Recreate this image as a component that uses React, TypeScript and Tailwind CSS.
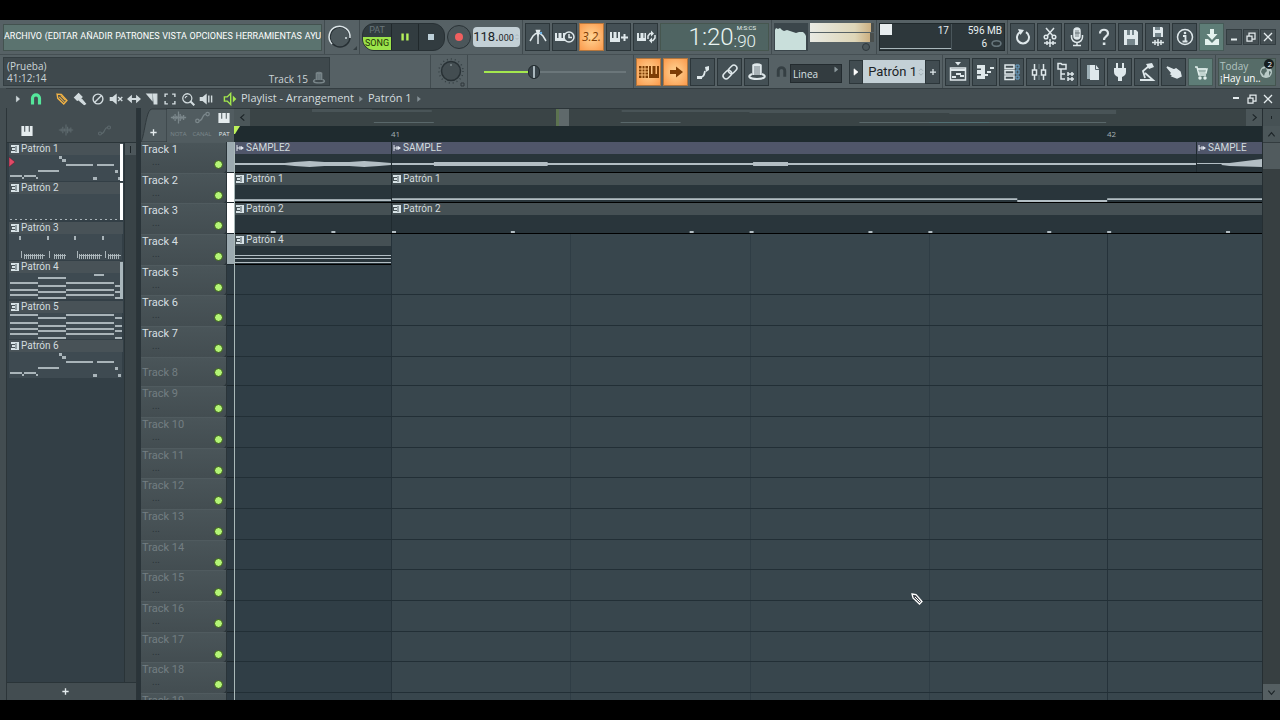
import type { ReactNode } from 'react';
import clsx from 'clsx';

type Note = [x: number, y: number, width: number, height?: number];

interface Pattern {
  name: string;
  notes: Note[];
  bar?: string;
  playing?: boolean;
}

const NARROW = 'font-[Roboto,sans-serif]';

const MELODY: Note[] = [
  [0, 20, 12], [12, 22, 2], [14, 20, 12], [26, 22, 2], [28, 15, 21], [49, 1, 3, 3], [52, 4, 4, 3],
  [56, 9, 27], [87, 9, 17], [105, 15, 3, 3], [83, 22, 4, 3], [108, 22, 3, 3],
];

const DRUM_BLOCKS: [number, number][] = [[14, 21], [44, 12], [69, 23], [98, 13]];

const DRUMS: Note[] = [
  ...[9, 37, 64, 92].map((x): Note => [x, 2, 2, 4]),
  ...[11, 39, 67, 95].map((x): Note => [x, 17, 1, 7]),
  ...DRUM_BLOCKS.flatMap(([x, w]) =>
    Array.from({ length: Math.floor(w / 2) }, (_, i): Note => [x + i * 2, 20, 1, 5]),
  ),
  ...DRUM_BLOCKS.map(([x, w]): Note => [x, 21, w, 1]),
];

function chords(outer: number[], inner: number[]): Note[] {
  return [
    ...outer.flatMap((y): Note[] => [[0, y, 28], [56, y, 48]]),
    ...inner.flatMap((y): Note[] => [[28, y, 28], [105, y, 7]]),
  ];
}

const PATTERNS: Pattern[] = [
  { name: 'Patrón 1', notes: MELODY, bar: 'bg-white', playing: true },
  { name: 'Patrón 2', notes: Array.from({ length: 22 }, (_, i): Note => [i * 5, 25, 2, 1]), bar: 'bg-white' },
  { name: 'Patrón 3', notes: DRUMS },
  { name: 'Patrón 4', notes: [...chords([9, 16, 21], [12, 18, 24]), [28, 4, 28], [84, 1, 10]], bar: 'bg-[#aab7bc]' },
  { name: 'Patrón 5', notes: chords([1, 9, 15, 20], [4, 12, 17, 24]) },
  { name: 'Patrón 6', notes: MELODY },
];

const TRACK_COUNT = 19;

function laneHeight(i: number) {
  if (i === 7) return 'h-[29px]';
  return i % 3 === 1 ? 'h-[30px]' : 'h-[31px]';
}

const LANE_BARS = ['bg-[#9dabb1]', 'bg-white', 'bg-white', 'bg-[#9dabb1]'];

function Icon({ children, size = 20, className }: { children: ReactNode; size?: number; className?: string }) {
  return (
    <svg
      viewBox="0 0 20 20"
      width={size}
      height={size}
      fill="none"
      stroke="currentColor"
      strokeWidth="1.5"
      className={clsx('shrink-0', className)}
      aria-hidden="true"
    >
      {children}
    </svg>
  );
}

const PIANO = <path d="M2 3v14h16V3h-4v8h-1.500V3h-5v8H6V3z" fill="currentColor" stroke="none" />;
const WAVE = <path d="M1 10h18M4 8v4M6 6v8M8 8v4M10 3v14M12 6v8M14 8v4M16 7v6" />;
const AUTOMATION = (
  <>
    <circle cx="4" cy="14" r="2" />
    <circle cx="16" cy="6" r="2" />
    <path d="M6 14c5 0 3-8 8-8" />
  </>
);
const MAGNET = <path d="M5 18V9a5 5 0 0 1 10 0v9" strokeWidth="4.500" />;

const ICONS = {
  metronome: (
    <>
      <path d="M2 14l3-5c2-2.500 3-3 5-3s3 .5 5 3l3 5M10 3v14" />
      <path d="M8.500 3.500h3L10 8z" fill="currentColor" />
      <circle cx="13" cy="6" r="1.200" fill="#6fb5e8" stroke="none" />
    </>
  ),
  wait: (
    <>
      <path d="M0 6v8h10V6H8v5H6.500V6h-3v5H2V6z" fill="currentColor" stroke="none" />
      <circle cx="14" cy="10" r="5" fill="#445055" />
      <path d="M14 7v3.500h3" />
    </>
  ),
  overdub: (
    <>
      <path d="M1 5v10h10V5H9v6H7.500V5h-3v6H3V5z" fill="currentColor" stroke="none" />
      <path d="M12 10.500h7M15.500 7v7" strokeWidth="2" />
    </>
  ),
  loopRecord: (
    <>
      <path d="M1 6v8h9V6H8.500v5h-1V6h-3v5H3V6z" fill="currentColor" stroke="none" />
      <path d="M12 12V9l2-2.500h2M19 8v3l-2 2.500h-2" />
      <path d="M15 3.500l3 3-3 3zM16 10.500l-3 3 3 3z" fill="currentColor" stroke="none" />
    </>
  ),
  undo: (
    <>
      <path d="M7 5.200a6 6 0 1 0 6 0" strokeWidth="2" />
      <path d="M5 2l6 1-3.500 5z" fill="currentColor" stroke="none" />
    </>
  ),
  cut: (
    <>
      <path d="M6 1l7 8M14 1L7 9" />
      <circle cx="6" cy="10" r="1.800" />
      <circle cx="14" cy="10" r="1.800" />
      <path d="M4 16h12M7 14v4M10 12v8M13 14v4" />
    </>
  ),
  mic: (
    <>
      <rect x="7" y="1" width="6" height="11" rx="3" fill="currentColor" />
      <path d="M4.500 8v2a5.500 5.500 0 0 0 11 0V8M10 15v3M6 18.500h8" />
      <path d="M9 3v7M11 3v7M8 6h5" stroke="#4a565b" strokeWidth=".7" />
    </>
  ),
  help: (
    <>
      <path d="M6 6.500C6 1.500 14 1.500 14 6.500c0 3-4 3-4 6.500" strokeWidth="2.200" />
      <path d="M8.800 15.500h2.600V18H8.800z" fill="currentColor" stroke="none" />
    </>
  ),
  save: (
    <>
      <path d="M3 3h12l2 2v13H3z" fill="currentColor" stroke="none" />
      <path d="M6 3h7v5H6zM6 12h8v6H6z" fill="#75858b" stroke="none" />
      <path d="M10 3v5" strokeWidth="2" />
    </>
  ),
  saveAs: (
    <>
      <path d="M5 0h9l1 1v9H5z" fill="currentColor" stroke="none" />
      <path d="M7 0h5v3H7zM7 6h6v4H7z" fill="#75858b" stroke="none" />
      <path d="M4 15.500h12M7 13v5M10 12v7M13 13v5" />
    </>
  ),
  info: (
    <>
      <circle cx="10" cy="10" r="7.500" />
      <path d="M8 9h2.500v5M7.500 14.500h5" strokeWidth="1.800" />
      <circle cx="10" cy="6" r="1.300" fill="currentColor" stroke="none" />
    </>
  ),
  download: (
    <>
      <path d="M8 2h4v5h3.500L10 13 4.500 7H8z" fill="currentColor" stroke="none" />
      <path d="M3 12v6h14v-6h-3l-4 4-4-4z" fill="currentColor" stroke="none" />
    </>
  ),
  typing: (
    <>
      <path d="M0 4h9v12H0z" fill="#7d3d05" stroke="none" />
      <path d="M0 7h9M0 10h9M0 13h9M3 4v12M6 4v12" stroke="#ffc27b" strokeWidth="1" />
      <path d="M10 4v12h10V4h-2v8h-1.500V4h-3v8H12V4z" fill="#7d3d05" stroke="none" />
    </>
  ),
  arrow: <path d="M4 8h6V4.500l7 5.500-7 5.500V12H4z" fill="#7d3d05" stroke="none" />,
  slide: (
    <>
      <path d="M7 15c4 0 4-2 5-6" strokeWidth="1.800" />
      <path d="M4 14h5v3H4zM12 5l4-1v4l-3 2z" fill="currentColor" stroke="none" />
    </>
  ),
  link: (
    <g transform="rotate(-45 10 10)">
      <rect x="1.500" y="7" width="9.500" height="6" rx="3" />
      <rect x="9" y="7" width="9.500" height="6" rx="3" />
    </g>
  ),
  hat: (
    <>
      <path d="M6 13V3c2-1.500 6-1.500 8 0v10" fill="currentColor" />
      <path d="M8 4v9M10 4v9M12 4v9" stroke="#56636a" strokeWidth=".8" />
      <path d="M5 12c-5 2-3 5 5 5s10-3 5-5" strokeWidth="2" />
    </>
  ),
  playlist: (
    <>
      <path d="M7 0h6l-3 3.500z" fill="currentColor" stroke="none" />
      <path d="M2.500 6h15v12h-15z" />
      <path d="M2 8h16M4 15h4M8 12h5M12 14h4" strokeWidth="2" />
    </>
  ),
  pianoRoll: (
    <>
      <path d="M2 3h8v14H2v-3.500h4V12H2V8h4V6.500H2z" fill="currentColor" stroke="none" />
      <path d="M10 13h3M12 10h4M15 6h4" strokeWidth="2.200" />
    </>
  ),
  rack: (
    <>
      <path d="M3 3h9v3.500H3zM3 8.500h9V12H3zM3 14h9v3.500H3z" />
      <path d="M14 3h3v3h-3zM14 8h3v4h-3zM14 14h3v3h-3z" stroke="#6fa9d3" strokeWidth="1" />
    </>
  ),
  mixer: (
    <>
      <path d="M5.500 2v16M14.500 2v16" />
      <path d="M3.500 8h4v5h-4zM12.500 8h4v5h-4z" fill="#3b464b" />
      <path d="M10 2v5M10 13v5" stroke="#75858b" strokeWidth="1" />
    </>
  ),
  browser: (
    <>
      <path d="M2 1.500h3l1 1h4V7H2zM5 7v10h4M5 12h4" />
      <path d="M12 12h6M12 17h6M12 10v4M16 10v4M12 15v4M16 15v4" />
    </>
  ),
  document: (
    <>
      <path d="M4 3h8v14H4z" fill="#9db0b7" stroke="none" />
      <path d="M7 3h6l3 4v11H7z" fill="currentColor" stroke="none" />
      <path d="M12.500 3v4.500H16" stroke="#56636a" strokeWidth="1" />
    </>
  ),
  plug: <path d="M6 1h2v5h4V1h2v5h2v4c0 3-2 4-4 5v4H8v-4c-2-1-4-2-4-5V6h2z" fill="currentColor" stroke="none" />,
  touch: (
    <>
      <path d="M12 4L6 9l2 7M3 18h13l-8-7" strokeWidth="1.800" />
      <path d="M9 2l6-1 2 4-5 2z" fill="currentColor" stroke="none" />
    </>
  ),
  hand: <path d="M3 5l7 3 2-1 4 3 1 4-4 2-5-2 1-1-2-1 1-1z" fill="currentColor" />,
  cart: (
    <>
      <path d="M4 5h2l2 8h7M7 7h9l-1 4H8" />
      <path d="M7 7h8M8 9h8" strokeWidth="1" />
      <circle cx="9" cy="16" r="1" fill="currentColor" />
      <circle cx="14" cy="16" r="1" fill="currentColor" />
    </>
  ),
  pencil: (
    <>
      <path d="M3 3l6 .5 8 8.500-4.500 5L4 9z" strokeWidth="2" />
      <path d="M6 7l8 8M8 5l7 7" strokeWidth="1.500" />
    </>
  ),
  brush: <path d="M2 8l6-6 5 5-2 2 2 2 5 6-2 1-6-5-2-2-2 1z" fill="currentColor" />,
  erase: (
    <>
      <circle cx="10" cy="10" r="7" strokeWidth="2" />
      <path d="M5 15L15 5" strokeWidth="2" />
    </>
  ),
  mute: (
    <>
      <path d="M1 7h4l6-5v16l-6-5H1z" fill="currentColor" stroke="none" />
      <path d="M13 7l6 6M19 7l-6 6" strokeWidth="2" />
    </>
  ),
  slip: <path d="M0 10l7-6v4.500h6V4l7 6-7 6v-4.500H7V16z" fill="currentColor" stroke="none" />,
  slice: (
    <>
      <path d="M1 2h10v12z" fill="currentColor" stroke="none" />
      <path d="M12 3h5v14h-4z" fill="currentColor" />
    </>
  ),
  select: <path d="M3 7V3h4M13 3h4v4M17 13v4h-4M7 17H3v-4" strokeWidth="2" />,
  zoom: (
    <>
      <circle cx="9" cy="9" r="6.500" strokeWidth="1.800" />
      <path d="M13 13l6 6" strokeWidth="3" />
      <path d="M6 9c0-2 1-3 3-3" />
    </>
  ),
  playback: (
    <>
      <path d="M1 7h4l6-5v16l-6-5H1z" fill="currentColor" stroke="none" />
      <path d="M14 5v10M18 5v10" strokeWidth="2" />
    </>
  ),
};

type IconName = keyof typeof ICONS;

function ToolButton({ icon, label, tone = 'dark' }: { icon: IconName; label: string; tone?: 'dark' | 'orange' | 'teal' }) {
  return (
    <button
      type="button"
      aria-label={label}
      className={clsx(
        'flex h-7 w-[25px] shrink-0 items-center justify-center border',
        tone === 'dark' && 'border-[#2c363a] bg-[#445055] text-[#dfe8eb]',
        tone === 'orange' && 'border-[#b5763c] bg-[radial-gradient(#ffd596,#fb9a4c)]',
        tone === 'teal' && 'border-[#465a57] bg-[#5e7d77] text-[#e3f1ee]',
      )}
    >
      <Icon>{ICONS[icon]}</Icon>
    </button>
  );
}

function Divider() {
  return <div className="h-[34px] w-px shrink-0 bg-[#414b4f]" />;
}

function WindowButtons({ framed = false }: { framed?: boolean }) {
  const cell = framed ? 'h-4 w-4 border border-[#333d41] bg-[#454f53]' : 'h-4 w-4';
  return (
    <div className={clsx('flex shrink-0 text-[#e5ecee]', framed ? 'gap-px' : 'gap-0')}>
      <button type="button" aria-label="Minimizar" className={clsx('flex items-center justify-center', cell)}>
        <Icon size={10}><path d={framed ? 'M4 15h12' : 'M4 8h12'} strokeWidth="4" /></Icon>
      </button>
      <button type="button" aria-label="Restaurar" className={clsx('flex items-center justify-center', cell)}>
        <Icon size={10}><path d="M2 8h10v10H2zM6 7V2h12v12h-5" strokeWidth="2.500" /></Icon>
      </button>
      <button type="button" aria-label="Cerrar" className={clsx('flex items-center justify-center', cell)}>
        <Icon size={10}><path d="M2 2l16 16M18 2L2 18" strokeWidth="2.500" /></Icon>
      </button>
    </div>
  );
}

const MENU = ['ARCHIVO', '(EDITAR', 'AÑADIR', 'PATRONES', 'VISTA', 'OPCIONES', 'HERRAMIENTAS', 'AYU'];

function Transport() {
  return (
    <div className="flex h-7 w-[83px] shrink-0 overflow-hidden rounded-[12px] border border-[#283135] bg-[#323c40]">
      <button type="button" className="flex w-7 shrink-0 flex-col font-[Roboto,sans-serif] text-[9px] leading-[13px]">
        <span className="h-[13px] w-full text-[#6a7679]">PAT</span>
        <span className="h-[13px] w-full bg-[#9be34a] text-[#1e3108]">SONG</span>
      </button>
      <button type="button" aria-label="Pausa" className="flex flex-1 items-center justify-center border-x border-[#20282b] text-[#b5f05a]">
        <Icon size={12}><path d="M6 4v12M14 4v12" strokeWidth="4" /></Icon>
      </button>
      <button type="button" aria-label="Detener" className="flex flex-1 items-center justify-center">
        <span className="h-[6px] w-[6px] bg-[#bccfd8]" />
      </button>
    </div>
  );
}

function MainToolbar() {
  return (
    <div className="flex h-[34px] items-center gap-0.5 pr-1 pl-[3px]">
      <nav
        className={clsx(
          NARROW,
          'flex h-[27px] w-[319px] shrink-0 items-center justify-between border border-[#43524f] bg-[#5b736f] text-[9px] whitespace-nowrap text-white',
        )}
      >
        {MENU.map((item) => (
          <a key={item} href="#">{item}</a>
        ))}
      </nav>
      <Divider />
      <svg viewBox="1 0 30 28" className="h-7 w-[30px] shrink-0" aria-hidden="true">
        <circle cx="14" cy="14" r="10" fill="#4c575b" stroke="#262f33" strokeWidth="1.500" />
        <path d="M6 21a10.500 10.500 0 1 1 18-6" fill="none" stroke="#dbe4e7" strokeWidth="1.500" />
        <circle cx="20" cy="15" r="1" fill="#d6dfe2" />
        <path d="M31 23v4h-4z" fill="#343e42" />
      </svg>
      <Divider />
      <Transport />
      <button type="button" aria-label="Grabar" className="flex h-6 w-6 shrink-0 items-center justify-center rounded-full border border-[#2a3337] bg-[#4b565a]">
        <span className="h-[8px] w-[8px] rounded-full bg-[#f05f5f]" />
      </button>
      <div className={clsx(NARROW, 'flex h-5 w-[47px] shrink-0 items-baseline justify-center rounded-sm bg-[#c3d0d6] text-[13px] leading-5 text-[#1b2326]')}>
        118.<span className="text-[9px]">000</span>
        <span className="self-center"><Icon size={6} className="text-[#8a989e]"><path d="M5 7l5-5 5 5M5 13l5 5 5-5" /></Icon></span>
      </div>
      <Divider />
      <ToolButton icon="metronome" label="Metrónomo" />
      <ToolButton icon="wait" label="Esperar entrada" />
      <button
        type="button"
        aria-label="Cuenta atrás"
        className="h-7 w-[25px] shrink-0 border border-[#b5763c] bg-[radial-gradient(#ffd596,#fb9a4c)] font-['Open_Sans',sans-serif] text-[12px] text-[#7d3d05] italic"
      >
        3.2.
      </button>
      <ToolButton icon="overdub" label="Sobregrabar" />
      <ToolButton icon="loopRecord" label="Grabación en bucle" />
      <div className={clsx(NARROW, 'flex h-7 w-[109px] shrink-0 justify-end border border-[#46564f] bg-[#4f6462] pr-3 text-[#e9f4f2]')}>
        <span className="text-[24px] leading-[26px] font-light">1:20</span>
        <div className="flex flex-col items-end">
          <span className="h-2 text-[6px] leading-[8px]">M:S:CS</span>
          <span className="text-[17px] leading-[18px] font-light">:90</span>
        </div>
      </div>
      <Divider />
      <svg viewBox="0 0 34 28" className="h-7 w-[34px] shrink-0" aria-hidden="true">
        <rect width="34" height="28" fill="#3b464b" />
        <path d="M1 27V7l1-2 2 1 2-1 2 2 2 1 3-1 3 1 3 1 3 1 3-1h4l2 2 1 2v14z" fill="#c9dfdb" />
      </svg>
      <div className="flex h-7 w-[64px] shrink-0 flex-col gap-px">
        <div className="h-[9px] bg-[linear-gradient(90deg,#e9eae3_0%,#ded6b8_70%,#cdb183_95%,#4a4f4d_96%)]" />
        <div className="h-[9px] bg-[linear-gradient(90deg,#e9eae3_0%,#ded6b8_70%,#cdb183_93%,#4a4f4d_94%)]" />
        <span className="mr-1 h-2 w-2 self-end rounded-full border border-[#2e373b] bg-[#4b565a]" />
      </div>
      <Divider />
      <div className={clsx(NARROW, 'flex h-7 min-w-[123px] flex-1 border border-[#20292c] bg-[#2d373b] text-[10px] leading-[13px] text-[#e8eff1]')}>
        <div className="relative flex-1 border-r border-[#4a565b]">
          <div className="h-[11px] w-3 bg-[#e8eef0]" />
          <span className="absolute top-0 right-0.5">17</span>
          <div className="mt-[13px] h-px bg-[#a9b7bb]" />
        </div>
        <div className="w-[52px] pr-0.5 text-right">
          <div>596 MB</div>
          <div className="flex items-center justify-end gap-1">
            6
            <Icon size={11} className="text-[#66757b]"><ellipse cx="10" cy="10" rx="8" ry="5" strokeWidth="3" /></Icon>
          </div>
        </div>
      </div>
      <Divider />
      <ToolButton icon="undo" label="Deshacer" />
      <ToolButton icon="cut" label="Cortar" />
      <ToolButton icon="mic" label="Grabar audio" />
      <ToolButton icon="help" label="Ayuda" />
      <ToolButton icon="save" label="Guardar" />
      <ToolButton icon="saveAs" label="Exportar" />
      <ToolButton icon="info" label="Información" />
      <ToolButton icon="download" label="Descargar" tone="teal" />
      <WindowButtons framed />
    </div>
  );
}

function ShortcutToolbar() {
  return (
    <div className="flex h-[34px] items-center gap-0.5 border-t border-[#454f53] pr-1 pl-[3px]">
      <div className="flex h-[29px] w-[327px] shrink-0 items-center border border-[#333d41] bg-[#3f494d] px-[3px] font-['Open_Sans',sans-serif] text-[10px] leading-[12px] text-[#ccd5d8]">
        <div className="flex-1">
          <p>(Prueba)</p>
          <p>41:12:14</p>
        </div>
        <span className="mr-1 self-end">Track 15</span>
        <Icon size={14} className="self-end text-[#7b878b]">{ICONS.hat}</Icon>
      </div>
      <div className="flex-1" />
      <Divider />
      <svg viewBox="-4 0 32 32" className="h-8 w-8 shrink-0" aria-hidden="true">
        <circle cx="14" cy="15" r="12" fill="none" stroke="#353f43" strokeWidth="1.500" strokeDasharray="1 3" />
        <circle cx="14" cy="15" r="9.500" fill="#434d51" stroke="#283135" strokeWidth="1.500" />
        <circle cx="14" cy="9" r="1" fill="#7b878b" />
        <path d="M24 27h3v3h-3z" fill="none" stroke="#30393d" />
      </svg>
      <Divider />
      <div className="flex w-[161px] shrink-0 justify-center pl-2">
        <input
          type="range"
          aria-label="Tono"
          defaultValue={34}
          className="h-4 w-[142px] appearance-none bg-[linear-gradient(90deg,#a4e84e_35%,#6b767a_35%)] bg-[length:100%_2px] bg-center bg-no-repeat [&::-webkit-slider-thumb]:h-[14px] [&::-webkit-slider-thumb]:w-[12px] [&::-webkit-slider-thumb]:appearance-none [&::-webkit-slider-thumb]:rounded-full [&::-webkit-slider-thumb]:border [&::-webkit-slider-thumb]:border-[#1f282c] [&::-webkit-slider-thumb]:bg-[linear-gradient(90deg,#39444a_4px,#a9b7bd_4px,#a9b7bd_6px,#39444a_6px)]"
        />
      </div>
      <Divider />
      <ToolButton icon="typing" label="Teclado a piano" tone="orange" />
      <ToolButton icon="arrow" label="Desplazamiento" tone="orange" />
      <ToolButton icon="slide" label="Deslizar" />
      <ToolButton icon="link" label="Enlazar" />
      <ToolButton icon="hat" label="Grabar automatización" />
      <div className="flex w-[76px] shrink-0 items-center gap-0.5 pl-1">
        <Icon size={13} className="text-[#353f43]">{MAGNET}</Icon>
        <div className="relative">
          <select
            aria-label="Ajuste"
            className="h-[19px] w-[52px] appearance-none border border-[#232b2f] bg-[#333c40] px-0.5 font-['Open_Sans',sans-serif] text-[10px] leading-[16px] text-[#d9e1e4]"
          >
            <option>Linea</option>
          </select>
          <Icon size={7} className="absolute top-[6px] right-0.5 text-[#8b979c]"><path d="M5 3l9 7-9 7z" fill="currentColor" /></Icon>
        </div>
      </div>
      <div className="flex w-[91px] shrink-0 items-center">
        <button type="button" aria-label="Menú de patrones" className="flex h-6 w-[14px] shrink-0 items-center justify-center border border-[#2c363a] bg-[#414c51] text-white">
          <Icon size={8}><path d="M5 2l10 8-10 8z" fill="currentColor" /></Icon>
        </button>
        <div className={clsx(NARROW, 'flex h-[23px] flex-1 items-center justify-end bg-[#c3d0d6] text-[13px] whitespace-nowrap text-[#1b2326]')}>
          Patrón 1
          <Icon size={8} className="text-[#8a989e]"><path d="M5 7l5-5 5 5M5 13l5 5 5-5" /></Icon>
        </div>
        <button type="button" aria-label="Añadir patrón" className="flex h-6 w-[15px] shrink-0 items-center justify-center border border-[#2c363a] bg-[#414c51] text-[#dfe8eb]">
          <Icon size={10}><path d="M10 4v12M4 10h12" strokeWidth="2.500" /></Icon>
        </button>
      </div>
      <Divider />
      <ToolButton icon="playlist" label="Playlist" />
      <ToolButton icon="pianoRoll" label="Piano roll" />
      <ToolButton icon="rack" label="Rack de canales" />
      <ToolButton icon="mixer" label="Mezclador" />
      <ToolButton icon="browser" label="Navegador" />
      <ToolButton icon="document" label="Proyecto" />
      <ToolButton icon="plug" label="Plugins" />
      <ToolButton icon="touch" label="Herramientas" />
      <ToolButton icon="hand" label="Táctil" />
      <ToolButton icon="cart" label="Tienda" tone="teal" />
      <Divider />
      <a href="#" className="relative flex h-7 w-[58px] shrink-0 flex-col justify-center border border-[#44544f] bg-[#566c68] pl-px font-['Open_Sans',sans-serif] text-[10px] leading-[12px]">
        <span className="text-[#b3c4c1]">Today</span>
        <span className="text-white">¡Hay un..</span>
        <svg viewBox="0 0 16 20" className="absolute top-0 right-0 h-5 w-4" aria-hidden="true">
          <circle cx="7" cy="13" r="6" fill="#b9cac7" />
          <path d="M3 10l4-1 1 3-2 2-1 3-3-4zM10 12l2 1-2 4z" fill="#566c68" />
          <circle cx="10" cy="5" r="5" fill="#161d1f" />
        </svg>
        <span className="absolute top-0 right-[3px] text-[8px] leading-[10px] text-white">2</span>
      </a>
    </div>
  );
}

const TOOLS: IconName[] = ['pencil', 'brush', 'erase', 'mute', 'slip', 'slice', 'select', 'zoom', 'playback'];

function PlaylistTitle() {
  return (
    <div className="flex h-5 items-center border-t border-[#343d41] bg-[#434d51] pr-1 pl-[3px] text-[#d3dcdf]">
      <button type="button" aria-label="Menú" className="flex w-[18px] justify-center">
        <Icon size={8}><path d="M6 3l8 7-8 7z" fill="currentColor" /></Icon>
      </button>
      <button type="button" aria-label="Imán" className="flex w-[18px] justify-center text-[#55e69b]">
        <Icon size={14}>{MAGNET}</Icon>
      </button>
      <div className="ml-2 flex">
        {TOOLS.map((tool) => (
          <button
            key={tool}
            type="button"
            aria-label={tool}
            className={clsx('flex w-[18px] justify-center', tool === 'pencil' && 'text-[#f2b345]')}
          >
            <Icon size={14}>{ICONS[tool]}</Icon>
          </button>
        ))}
      </div>
      <Icon size={14} className="ml-2 text-[#a4e84e]">
        <path d="M2 7h4l5-5v16l-5-5H2z" strokeWidth="2" />
        <path d="M14 5l5 5-5 5z" fill="currentColor" stroke="none" />
      </Icon>
      <h1 className="ml-1 flex flex-1 items-center gap-1 font-['Open_Sans',sans-serif] text-[11px]">
        Playlist - Arrangement
        <Icon size={6} className="text-[#869297]"><path d="M5 2l10 8-10 8z" fill="currentColor" /></Icon>
        Patrón 1
        <Icon size={6} className="text-[#869297]"><path d="M5 2l10 8-10 8z" fill="currentColor" /></Icon>
      </h1>
      <WindowButtons />
    </div>
  );
}

function PatternGlyph() {
  return (
    <svg viewBox="0 0 8 8" className="h-2 w-2 shrink-0" aria-hidden="true">
      <path d="M0 0h8v8H0V6h4V5H1V3h3V2H0z" fill="#d7e2e6" />
      <path d="M5 1v6" stroke="#4b575c" />
    </svg>
  );
}

function PickerItem({ pattern }: { pattern: Pattern }) {
  return (
    <li className="relative h-[39px] even:h-10">
      <div className={clsx(NARROW, 'flex h-3 items-center gap-0.5 bg-[#485257] pl-0.5 text-[10px] leading-3 text-[#d3dcdf]')}>
        <PatternGlyph />
        {pattern.name}
      </div>
      <svg viewBox="0 0 113 26" className="h-[26px] w-[113px] bg-[#3e4a51]" aria-hidden="true">
        {pattern.notes.map(([x, y, w, h = 2], i) => (
          <rect key={i} x={x + 1} y={y} width={w} height={h} fill="#a9b4b9" />
        ))}
      </svg>
      {pattern.bar ? <div className={clsx('absolute top-px right-0 h-[37px] w-[3px]', pattern.bar)} /> : null}
      {pattern.playing ? (
        <svg viewBox="0 0 6 10" className="absolute top-[14px] left-0 h-[10px] w-[6px]" aria-hidden="true">
          <path d="M0 0l6 5-6 5z" fill="#e04a67" stroke="#5a1b2b" strokeWidth=".5" />
        </svg>
      ) : null}
    </li>
  );
}

function PatternPicker() {
  return (
    <aside className="flex w-[130px] shrink-0 flex-col border-l border-[#2c3539] bg-[#434d51]">
      <div className="flex h-[34px] items-end pb-1">
        <button type="button" aria-label="Patrones" className="flex w-[39px] justify-center text-[#e5ecee]"><Icon size={14}>{PIANO}</Icon></button>
        <button type="button" aria-label="Audio" className="flex w-[39px] justify-center text-[#5c686c]"><Icon size={16}>{WAVE}</Icon></button>
        <button type="button" aria-label="Automatización" className="flex w-[39px] justify-center text-[#5c686c]"><Icon size={15}>{AUTOMATION}</Icon></button>
      </div>
      <div className="flex flex-1 border-y border-[#2a3438]">
        <ul className="w-[117px] bg-[#333f46] pr-px pl-[2px]">
          {PATTERNS.map((pattern) => (
            <PickerItem key={pattern.name} pattern={pattern} />
          ))}
        </ul>
        <div className="flex-1 border-l border-[#2a3438] bg-[#394347]">
          <div className="flex h-3 items-center justify-center bg-[#4c565a]">
            <span className="h-[7px] w-px bg-[#1d2528]" />
          </div>
        </div>
      </div>
      <button type="button" aria-label="Añadir patrón" className="flex h-[17px] w-[117px] items-center justify-center text-[#e5ecee]">
        <Icon size={9}><path d="M10 3v14M3 10h14" strokeWidth="3" /></Icon>
      </button>
    </aside>
  );
}

function TrackHeader({ index }: { index: number }) {
  const used = index < 7;
  const small = index === 7;
  const id = `track-${index + 1}`;

  return (
    <li className={clsx('flex shrink-0', laneHeight(index))}>
      <div
        className={clsx(
          NARROW,
          'flex flex-1 justify-between rounded-br-[4px] border-t border-[#505b5f] bg-[linear-gradient(#4a5559,#434d51)] pr-[3px] pl-px text-[11px] leading-[13px]',
          small && 'items-center',
        )}
      >
        <div className="flex flex-col">
          <label htmlFor={id} className={used ? 'text-[#d6dfe2]' : 'text-[#737e82]'}>
            Track {index + 1}
          </label>
          {small ? null : <span className="pl-[10px] text-[10px] leading-[12px] text-[#2b3438]">...</span>}
        </div>
        <input
          id={id}
          type="checkbox"
          defaultChecked
          className={clsx(
            'h-[9px] w-[9px] appearance-none rounded-full border border-[#37571c] checked:bg-[#b4f576]',
            !small && 'mt-[17px]',
          )}
        />
      </div>
      <div className={clsx('ml-px w-[7px] border-b border-[#1d272c]', LANE_BARS[index] ?? 'bg-[#2e3b43]')} />
    </li>
  );
}

function TrackHeaders() {
  return (
    <div className="flex w-[98px] shrink-0 flex-col overflow-hidden border-l border-[#2c3539] bg-[#2a3439] pl-1">
      <div className="flex h-[34px] shrink-0 bg-[#434d51]">
        <div className="relative flex w-[26px] items-end justify-center border-r border-[#363f43] pb-[5px] text-[#e5ecee]">
          <svg viewBox="0 0 26 34" className="absolute inset-0 h-[34px] w-[26px]" aria-hidden="true">
            <path d="M0 34C4 26 5 1 11 1h15v33z" fill="#515c60" stroke="#30393d" />
          </svg>
          <button type="button" aria-label="Añadir pista" className="relative">
            <Icon size={9}><path d="M10 3v14M3 10h14" strokeWidth="3" /></Icon>
          </button>
        </div>
        <div className="flex flex-1 justify-around border-t border-[#30393d] bg-[#515c60] font-['Open_Sans',sans-serif] text-[6px] leading-[8px] text-[#7b878b]">
          <button type="button" className="flex flex-col items-center gap-1"><Icon size={17}>{WAVE}</Icon>NOTA</button>
          <button type="button" className="flex flex-col items-center gap-1"><Icon size={17}>{AUTOMATION}</Icon>CANAL</button>
          <button type="button" className="flex flex-col items-center gap-1 text-[#e5ecee]">
            <span className="flex h-[17px] items-center"><Icon size={14}>{PIANO}</Icon></span>
            PAT
          </button>
        </div>
      </div>
      <ul className="flex h-0 flex-1 flex-col overflow-hidden">
        {Array.from({ length: TRACK_COUNT }, (_, i) => (
          <TrackHeader key={i} index={i} />
        ))}
      </ul>
    </div>
  );
}

function Clip({ name, audio = false, className, children }: { name: string; audio?: boolean; className: string; children?: ReactNode }) {
  return (
    <div className={clsx('flex flex-col border-l border-[#1f2a2f] bg-[#29353b]', className)}>
      <div
        className={clsx(
          NARROW,
          'flex h-3 shrink-0 items-center gap-0.5 pl-px text-[10px] leading-3 text-[#d3dcdf]',
          audio ? 'bg-[#50566a]' : 'bg-[#455054]',
        )}
      >
        {audio ? (
          <svg viewBox="0 0 8 8" className="h-2 w-2 shrink-0" aria-hidden="true">
            <path d="M1 1v6M1 4h6M4 2v4" stroke="#e3e8f0" fill="none" />
            <path d="M5 2l3 2-3 2z" fill="#e3e8f0" />
          </svg>
        ) : (
          <PatternGlyph />
        )}
        {name}
      </div>
      <div className="min-h-0 flex-1">{children}</div>
    </div>
  );
}

function ClipDrawing({ width, children }: { width: number; children: ReactNode }) {
  return (
    <svg viewBox={`0 0 ${width} 18`} preserveAspectRatio="none" className="h-full w-full" fill="#b3bec4" aria-hidden="true">
      {children}
    </svg>
  );
}

const CELLS = 'grid grid-cols-[157px_179px_180px_179px_178px_1fr]';

function EmptyCells({ from = 0 }: { from?: number }) {
  return (
    <>
      {[0, 1, 2, 3, 4, 5].slice(from).map((cell) => (
        <div
          key={cell}
          className={clsx('border-l', cell === 0 && 'border-[#2e3b42] bg-[#303e46]', cell > 0 && 'bg-[#38464d]', (cell === 1 || cell === 5) ? 'border-[#25323a]' : cell > 0 && 'border-[#2f3d45]')}
        />
      ))}
    </>
  );
}

const BEATS = [119, 298, 358, 477, 537, 656, 716];

function Lanes() {
  return (
    <div className="relative flex h-0 flex-1 flex-col overflow-hidden bg-[#38464d]">
      <div className={clsx('flex shrink-0 border-b border-black', laneHeight(0))}>
        <Clip name="SAMPLE2" audio className="w-[157px]">
          <ClipDrawing width={157}>
            <rect y="9" width="157" height="2" />
            <path d="M50 9l10-1 15-1 15 1h25l15-1 15 1 12 1v2l-12 1-15 1-15-1H90l-15 1-15-1-10-1z" />
          </ClipDrawing>
        </Clip>
        <Clip name="SAMPLE" audio className="flex-1">
          <ClipDrawing width={806}>
            <rect y="9" width="806" height="2" />
            <path d="M42 8h114v4H42zM362 8h35v4h-35z" />
          </ClipDrawing>
        </Clip>
        <Clip name="SAMPLE" audio className="w-[66px]">
          <ClipDrawing width={66}>
            <rect y="9" width="66" height="1" />
            <path d="M25 9l8 0 33-4v8l-33-1-8-1z" />
          </ClipDrawing>
        </Clip>
      </div>
      <div className={clsx('flex shrink-0 border-b border-black', laneHeight(1))}>
        <Clip name="Patrón 1" className="w-[157px]">
          <ClipDrawing width={157}><rect y="15" width="157" height="2" /></ClipDrawing>
        </Clip>
        <Clip name="Patrón 1" className="flex-1">
          <ClipDrawing width={871}><path d="M0 14h626v2h90v-2h155v2H716v2h-90v-2H0z" /></ClipDrawing>
        </Clip>
      </div>
      <div className={clsx('flex shrink-0 border-b border-black', laneHeight(2))}>
        <Clip name="Patrón 2" className="w-[157px]">
          <ClipDrawing width={157}><path d="M36 16h5v2h-5zM97 16h4v2h-4z" /></ClipDrawing>
        </Clip>
        <Clip name="Patrón 2" className="flex-1">
          <ClipDrawing width={871}>
            {[0, ...BEATS, 835].map((x) => (
              <rect key={x} x={x} y="16" width="4" height="2" />
            ))}
          </ClipDrawing>
        </Clip>
      </div>
      <div className={clsx('shrink-0 border-b border-[#25323a]', CELLS, laneHeight(3))}>
        <Clip name="Patrón 4" className="border-b border-b-black">
          <ClipDrawing width={157}><path d="M0 9h157v1H0zM0 12h157v1H0zM0 16h157v1H0z" /></ClipDrawing>
        </Clip>
        <EmptyCells from={1} />
      </div>
      {Array.from({ length: TRACK_COUNT - 4 }, (_, i) => (
        <div key={i} className={clsx('shrink-0 border-b border-[#222f36]', CELLS, laneHeight(i + 4))}>
          <EmptyCells />
        </div>
      ))}
      <div className="absolute inset-y-0 left-0 w-px bg-[#aab9b9]" />
      <svg viewBox="0 0 12 12" className="absolute top-[451px] left-[677px] h-3 w-3" aria-hidden="true">
        <path d="M1 1l4 .5 6 7-2.500 2.500L2 5z" fill="#3a3f46" stroke="#fff" strokeWidth="1.300" />
        <path d="M4 4l5 5" stroke="#fff" />
      </svg>
    </div>
  );
}

function Arrangement() {
  return (
    <div className="flex min-w-0 flex-1 flex-col">
      <div className="flex h-[18px] shrink-0 border-t border-[#2c3539] bg-[#3a4446]">
        <button type="button" aria-label="Anterior" className="flex w-4 items-center justify-center bg-[#4b5659] text-[#1c2427]">
          <Icon size={9}><path d="M14 3l-8 7 8 7" strokeWidth="2.500" /></Icon>
        </button>
        <div className="relative flex-1">
          <svg viewBox="0 0 997 17" preserveAspectRatio="none" className="h-full w-full" aria-hidden="true">
            <path d="M62 0h60v1h60v2H62zM372 1h495v2H372zM500 3h230v1H500zM700 3h167v2H700z" fill="#495457" />
            <path d="M124 13h60v1h-60zM371 13h60v1h-60zM610 13h247v1H610z" fill="#59676a" />
            <path d="M680 13h60v1h-60z" fill="#527176" />
          </svg>
          <div className="absolute inset-y-0 left-[306px] w-[13px] border-l-[3px] border-[#5c7350] bg-[#5f696b]" />
        </div>
        <button type="button" aria-label="Siguiente" className="flex w-4 items-center justify-center bg-[#4b5659] text-[#1c2427]">
          <Icon size={9}><path d="M6 3l8 7-8 7" strokeWidth="2.500" /></Icon>
        </button>
      </div>
      <div className={clsx("relative h-4 shrink-0 bg-[#1f2b2f] font-['Open_Sans',sans-serif] text-[8px] leading-4 text-[#a3afb3]", CELLS)}>
        <span />
        <span>41</span>
        <span className="col-start-6">42</span>
        <svg viewBox="0 0 6 8" className="absolute top-0 left-0 h-2 w-[6px]" aria-hidden="true">
          <path d="M0 0h6L1 8H0z" fill="#bdf25a" />
        </svg>
      </div>
      <Lanes />
    </div>
  );
}

function VerticalScroll() {
  return (
    <div className="flex w-[18px] shrink-0 flex-col border-l border-[#252e32] bg-[#373f41] text-[#1c2427]">
      <div className="flex h-[18px] items-center justify-center border-t border-[#2c3539] bg-[#465154]">
        <span className="h-[3px] w-px bg-[#1c2427]" />
      </div>
      <button type="button" aria-label="Arriba" className="flex h-4 items-center justify-center bg-[#4b5659]">
        <Icon size={9}><path d="M3 14l7-8 7 8" strokeWidth="2.500" /></Icon>
      </button>
      <div className="h-[27px] border-t border-[#333c3f] bg-[#515b5e]" />
      <div className="flex-1" />
      <button type="button" aria-label="Abajo" className="flex h-4 items-center justify-center bg-[#555f62]">
        <Icon size={9}><path d="M3 6l7 8 7-8" strokeWidth="2.500" /></Icon>
      </button>
    </div>
  );
}

export default function App() {
  return (
    <div className="flex h-screen flex-col overflow-hidden bg-black py-5">
      <header className="shrink-0 bg-[#566165]">
        <MainToolbar />
        <ShortcutToolbar />
      </header>
      <main className="flex min-h-0 flex-1 flex-col bg-[#434d51] pl-[6px]">
        <PlaylistTitle />
        <div className="flex min-h-0 flex-1">
          <PatternPicker />
          <TrackHeaders />
          <Arrangement />
          <VerticalScroll />
        </div>
      </main>
    </div>
  );
}
